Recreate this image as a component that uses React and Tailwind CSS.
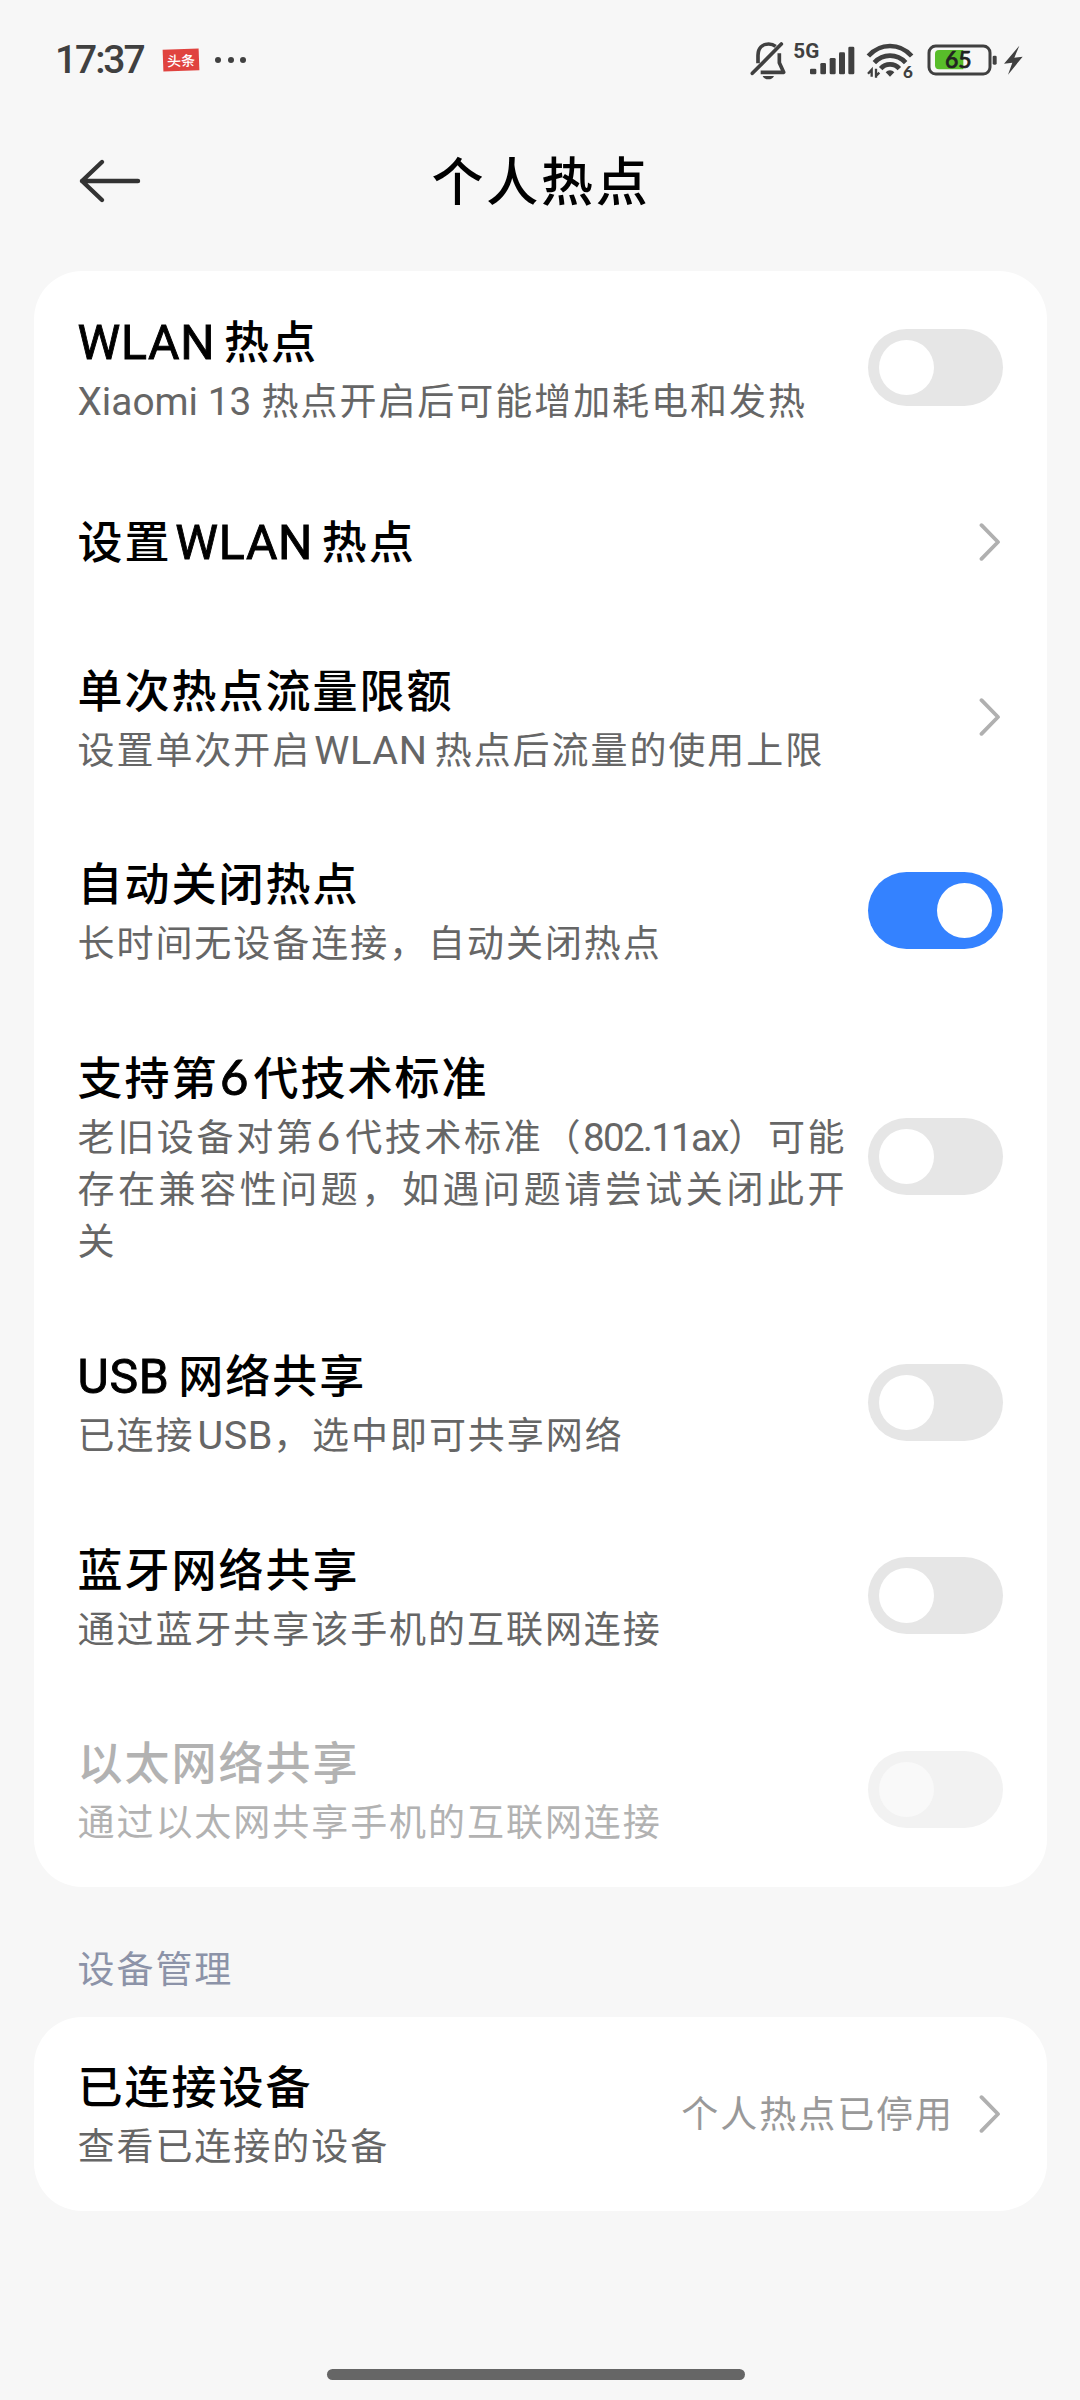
const items = [
  { title: 'WLAN热点', desc: ['Xiaomi 13 热点开启后可能增加耗电和发热'], type: 'switch' },
  { title: '设置WLAN热点', type: 'link' },
  { title: '单次热点流量限额', desc: ['设置单次开启WLAN热点后流量的使用上限'], type: 'link' },
  { title: '自动关闭热点', desc: ['长时间无设备连接，自动关闭热点'], type: 'switch', on: true },
  {
    title: '支持第6代技术标准',
    desc: ['老旧设备对第6代技术标准（802.11ax）可能', '存在兼容性问题，如遇问题请尝试关闭此开', '关'],
    type: 'switch',
  },
  { title: 'USB网络共享', desc: ['已连接USB，选中即可共享网络'], type: 'switch' },
  { title: '蓝牙网络共享', desc: ['通过蓝牙共享该手机的互联网连接'], type: 'switch' },
  { title: '以太网络共享', desc: ['通过以太网共享手机的互联网连接'], type: 'switch', disabled: true },
]

// Latin runs get their own face and side gaps, depending on what they hold
const latinClass = (part, prev, next) => {
  if (part === '6') return "font-['Lato'] text-[1.09em] ml-[0.03em] mr-[0.06em]"
  if (/^[A-Z]+$/.test(part)) {
    return `font-['Roboto'] text-[1.07em] tracking-[0.015em] ${next.startsWith('，') ? '' : 'mr-[0.18em]'} ${
      prev ? 'ml-[0.08em]' : ''
    }`
  }
  if (part.includes('.')) return "font-['Roboto'] text-[1.04em] tracking-[-0.045em]"
  return "font-['Roboto'] text-[1.05em] tracking-[0em]"
}

const Mixed = ({ text, strong }) =>
  text.split(/([A-Za-z0-9.]+(?: [A-Za-z0-9.]+)*)/).map((part, i, parts) =>
    i % 2 ? (
      <span
        key={i}
        className={`leading-none font-normal ${latinClass(part, parts[i - 1], parts[i + 1])} ${
          strong ? '[-webkit-text-stroke:0.9px_currentColor]' : ''
        }`}
      >
        {part}
      </span>
    ) : (
      part
    )
  )

const Switch = ({ on, disabled }) => (
  <div
    className={`flex h-[77px] w-[135px] shrink-0 items-center rounded-full px-[11px] ${
      on ? 'justify-end bg-[#3482ff]' : disabled ? 'justify-start bg-[#f2f2f2]' : 'justify-start bg-[#e6e6e6]'
    }`}
  >
    <div className={`size-[55px] rounded-full ${disabled ? 'bg-[#f9f9f9]' : 'bg-white'}`} />
  </div>
)

const Chevron = () => (
  <svg className="mr-[2px] h-[40px] w-[22px] shrink-0" viewBox="0 0 22 40" fill="none">
    <path d="M2.5 3.2L19 20L2.5 36.8" stroke="#b0b0b0" strokeWidth="3.8" strokeLinecap="round" strokeLinejoin="round" />
  </svg>
)

const Label = ({ title, desc, disabled }) => (
  <div className={desc ? '' : 'pt-[7px] pb-[11px]'}>
    <div
      className={`text-[45px] leading-[58px] font-medium tracking-[2px] ${disabled ? 'text-[#b2b2b2]' : 'text-black'}`}
    >
      <Mixed text={title} strong />
    </div>
    {desc && (
      <div
        className={`mt-[5px] text-[37px] leading-[51.7px] tracking-[1.95px] whitespace-nowrap ${
          disabled ? 'text-[#b2b2b2]' : 'text-[#666]'
        }`}
      >
        {desc.map((line, i) => (
          <div key={line} className={i < desc.length - 1 ? '[text-align-last:justify]' : ''}>
            <Mixed text={line} />
          </div>
        ))}
      </div>
    )}
  </div>
)

const Row = ({ item }) => (
  <div className="flex items-center justify-between pt-[39.5px] pr-[44px] pb-[39.7px] pl-[43.5px]">
    <div className="w-[769px]">
      <Label title={item.title} desc={item.desc} disabled={item.disabled} />
    </div>
    {item.type === 'switch' ? <Switch on={item.on} disabled={item.disabled} /> : <Chevron />}
  </div>
)

const StatusBar = () => (
  <div className="flex h-[90px] items-end justify-between pr-[50px] pl-[55px] text-[#404040]">
    <div className="flex h-[60px] items-center">
      <span className="w-[108px] font-['Roboto'] text-[39px] leading-none font-medium tracking-[-2.1px]">17:37</span>
      <span className="flex h-[22px] w-[36px] -rotate-2 items-center justify-center bg-[#e0433f] text-[14px] leading-none font-medium text-white">
        头条
      </span>
      <div className="ml-[16px] flex gap-[6.5px]">
        <span className="size-[6px] rounded-full bg-current" />
        <span className="size-[6px] rounded-full bg-current" />
        <span className="size-[6px] rounded-full bg-current" />
      </div>
    </div>
    <div className="flex h-[60px]">
      <svg className="h-[60px] w-[40px]" viewBox="30 0 120 180" fill="none" stroke="#404040" strokeWidth="11">
        <path d="M54 100V76C54 55 67 42 86 42C95 42 102 45 107 49" />
        <path d="M118 70V98L131 127H62" strokeLinejoin="round" />
        <path d="M37 130L124 42" strokeWidth="11" strokeLinecap="round" />
        <path d="M68 138H102C99 145 93 148 85 148C77 148 71 145 68 138Z" fill="#404040" stroke="none" />
      </svg>
      <svg className="h-[60px] w-[70px]" viewBox="150 0 210 180" fill="#404040">
        <text x="160" y="83" fontFamily="Roboto" fontWeight="700" fontSize="62">5G</text>
        <rect x="210" y="116" width="19" height="17" rx="4" />
        <rect x="241" y="99" width="17" height="34" rx="4" />
        <rect x="269" y="84" width="18" height="49" rx="4" />
        <rect x="297" y="67" width="18" height="66" rx="4" />
        <rect x="325" y="50" width="18" height="83" rx="4" />
      </svg>
      <svg className="h-[60px] w-[60px]" viewBox="360 0 180 180" fill="none" stroke="#404040" strokeWidth="14">
        <path d="M385 78C421 38 479 38 515 78" />
        <path d="M403 98C429 70 471 70 497 98" />
        <path d="M422 116C437 99 463 99 478 116" />
        <path d="M437 127C444 119 456 119 463 127L450 140Z" fill="#404040" stroke="none" />
        <path d="M384 131L395 119V140M408 116V143M408 138L418 128" strokeWidth="7" />
        <text x="489" y="144" fill="#404040" stroke="none" fontFamily="Lato" fontWeight="900" fontSize="51">6</text>
      </svg>
      <svg className="h-[60px] w-[80px]" viewBox="540 0 240 180">
        <rect x="567" y="48" width="183" height="84" rx="20" fill="none" stroke="#404040" strokeWidth="9" />
        <path d="M597 60H670V118H597Q585 118 585 106V72Q585 60 597 60Z" fill="#58bd2a" />
        <rect x="758" y="77" width="12" height="27" rx="4" fill="#404040" />
        <text x="615" y="115" fontFamily="Lato" fontWeight="500" fontSize="69" fill="#222" stroke="#222" strokeWidth="2">65</text>
      </svg>
      <svg className="h-[60px] w-[30px]" viewBox="780 0 90 180" fill="#404040">
        <path d="M838 47L792 101L817 98L804 134L848 80L823 83Z" />
      </svg>
    </div>
  </div>
)

export default function App() {
  return (
    <div className="flex h-[2400px] w-[1080px] flex-col bg-[#f7f7f7] font-['Noto_Sans_CJK_SC',sans-serif]">
      <StatusBar />
      <header className="grid h-[181px] grid-cols-[80px_1fr_80px] items-center">
        <svg className="ml-[78px] h-[46px] w-[64px]" viewBox="0 0 64 46" fill="none" stroke="#333" strokeWidth="4.4" strokeLinecap="round" strokeLinejoin="round">
          <path d="M24 4L4 23L24 42M4 23H60" />
        </svg>
        <h1 className="pb-[4px] pl-[2px] text-center text-[52px] leading-none font-medium tracking-[2.8px] text-black">个人热点</h1>
      </header>

      <section className="mr-[33px] ml-[34px] rounded-[48px] bg-white">
        {items.map((item) => (
          <Row key={item.title} item={item} />
        ))}
      </section>

      <div className="flex h-[130px] items-center pt-[31px] pl-[77.5px] text-[37px] leading-none tracking-[1.95px] text-[#8c93a8]">
        设备管理
      </div>

      <section className="mr-[33px] ml-[34px] flex items-center justify-between rounded-[48px] bg-white pt-[39.5px] pr-[44px] pb-[39.7px] pl-[43.5px]">
        <Label title="已连接设备" desc={['查看已连接的设备']} />
        <div className="flex items-center gap-[25px]">
          <span className="pb-[2px] text-[37px] leading-none tracking-[1.95px] text-[#999]">个人热点已停用</span>
          <Chevron />
        </div>
      </section>

      <div className="mt-auto mb-[20px] ml-[327px] h-[11px] w-[418px] rounded-full bg-[#666]" />
    </div>
  )
}
